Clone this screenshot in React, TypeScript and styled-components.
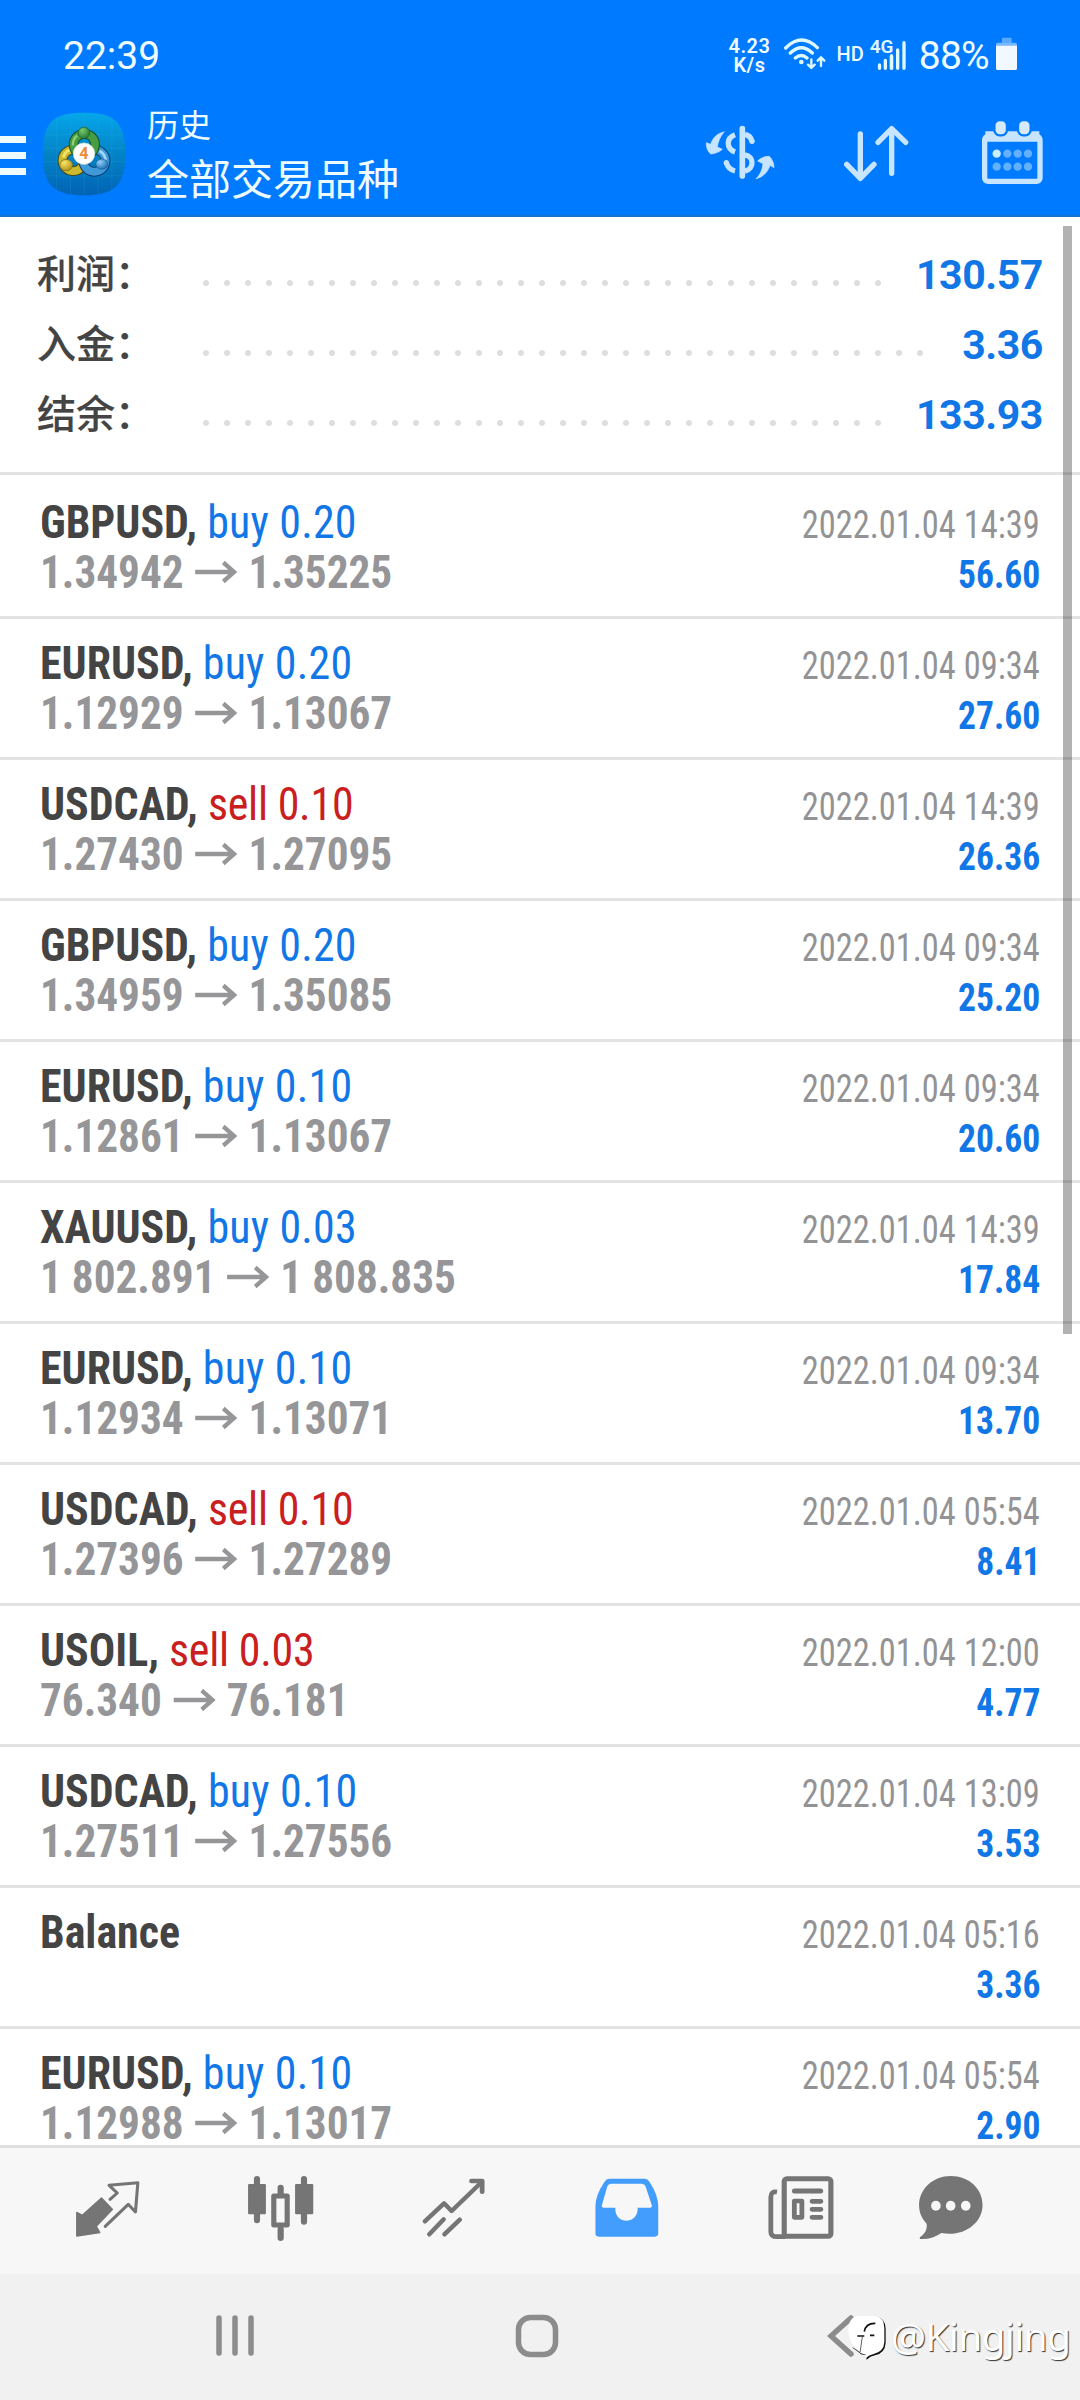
import React from "react";
import styled, { createGlobalStyle } from "styled-components";

const Global = createGlobalStyle`
  * { box-sizing: border-box; }
  body { margin: 0; background: #fff; }
`;

const latin = `Roboto, "Noto Sans CJK SC", sans-serif`;
const condensed = `"Roboto Condensed", Roboto, "Noto Sans CJK SC", sans-serif`;

const Screen = styled.div`
  position: relative;
  width: 1080px;
  height: 2400px;
  display: flex;
  flex-direction: column;
  overflow: hidden;
  background: #fff;
  font-family: ${latin};
`;

const Header = styled.header`
  height: 217px;
  flex: none;
  background: #007aff;
  border-bottom: 2px solid #1a72cf;
  color: #effcff;
  display: flex;
  flex-direction: column;
`;

const StatusBar = styled.div`
  height: 100px;
  padding: 8px 63px 0 63px;
  display: flex;
  align-items: center;
`;
const Clock = styled.div`
  font-size: 39px;
  line-height: 46px;
  flex: 1;
  padding-top: 4px;
`;
const Speed = styled.div`
  font-size: 20px;
  line-height: 19px;
  font-weight: 600;
  letter-spacing: 0.5px;
  text-align: center;
  padding-top: 3px;
  margin-right: 13px;
`;
const Hd = styled.div`
  font-size: 20px;
  font-weight: 500;
  margin: 0 5px 0 8px;
`;
const Percent = styled.div`
  font-size: 39px;
  line-height: 46px;
  letter-spacing: -0.7px;
  margin: 4px 7px 0 12px;
`;

const AppBar = styled.div`
  flex: 1;
  display: flex;
  align-items: flex-start;
`;
const Burger = styled.div`
  margin-top: 36px;
  width: 26px;
  display: flex;
  flex-direction: column;
  gap: 9px;
`;
const BurgerLine = styled.span`
  height: 7px;
  background: #effcff;
`;
const LogoBox = styled.div`
  width: 84px;
  height: 84px;
  margin: 12px 0 0 16px;
`;
const Titles = styled.div`
  margin: 3px 0 0 21px;
  flex: 1;
  font-weight: 400;
`;
const Caption = styled.div`
  font-size: 32px;
  line-height: 46px;
`;
const Title = styled.div`
  font-size: 42px;
  line-height: 62px;
  padding-top: 1px;
`;
const Actions = styled.div`
  display: flex;
  width: 390px;
  padding-top: 10px;
`;

const Summary = styled.section`
  height: 255px;
  flex: none;
  padding: 22px 37px 0;
`;
const SummaryRow = styled.div`
  height: 70px;
  display: flex;
  align-items: center;
`;
const SummaryLabel = styled.div`
  width: 166px;
  font-size: 39px;
  line-height: 56px;
  padding-top: 2px;
  font-weight: 500;
  color: #444;
  -webkit-text-stroke: 0.2px #444;
`;
const Dots = styled.div`
  flex: 1;
  height: 6px;
  margin: 17px 28px 0 0;
  background: radial-gradient(circle at 3px 3px, #dedede 2.6px, transparent 3.4px) 0 0 / 21px 6px repeat-x;
`;
const SummaryValue = styled.div`
  font-size: 41px;
  line-height: 48px;
  padding-top: 2px;
  font-weight: 700;
  color: #1277e6;
  letter-spacing: -0.4px;
`;

const List = styled.main`
  flex: none;
  height: 1673px;
  overflow: hidden;
  border-top: 3px solid #e3e3e3;
  padding-top: 3px;
`;
const Row = styled.article`
  height: 141px;
  border-bottom: 3px solid #e3e3e3;
  padding: 19px 40px 0;
  display: flex;
  justify-content: space-between;
  font-family: ${condensed};
  font-stretch: 75%;
  white-space: nowrap;
`;
const Side = styled.div<{ $end?: boolean }>`
  display: flex;
  flex-direction: column;
  align-items: ${(p) => (p.$end ? "flex-end" : "flex-start")};
`;
const NameLine = styled.div`
  font-size: 46px;
  line-height: 50px;
  font-weight: 700;
  color: #444;
  transform: scaleX(0.955);
  transform-origin: left;
`;
const Order = styled.span<{ $sell: boolean }>`
  font-weight: 400;
  letter-spacing: ${(p) => (p.$sell ? "-0.25px" : "0.2px")};
  color: ${(p) => (p.$sell ? "#c9201f" : "#1277e6")};
`;
const PriceLine = styled.div`
  display: flex;
  align-items: center;
  gap: 12px;
  font-size: 46px;
  line-height: 50px;
  font-weight: 700;
  color: #969699;
  transform: scaleX(0.94);
  transform-origin: left;
`;
const Time = styled.div`
  font-size: 39px;
  line-height: 50px;
  padding-top: 3px;
  height: 50px;
  color: #939396;
  transform: scaleX(0.882);
  transform-origin: right;
`;
const Profit = styled.div`
  font-size: 39px;
  line-height: 50px;
  padding-top: 3px;
  font-weight: 700;
  color: #1277e6;
  transform: scaleX(0.912);
  transform-origin: right;
`;

const Scrollbar = styled.div`
  position: absolute;
  left: 1063px;
  top: 226px;
  width: 9px;
  height: 1108px;
  background: rgba(0, 0, 0, 0.3);
`;

const Tabs = styled.nav`
  flex: none;
  height: 129px;
  padding: 0 64px 7px 21px;
  border-top: 3px solid #e0e0e0;
  background: #f7f7f7;
  display: grid;
  grid-template-columns: repeat(5, 173px) 130px;
  align-items: center;
  justify-items: center;
`;
const SystemNav = styled.nav`
  flex: 1;
  background: #f1f1f1;
  display: flex;
  padding: 40px 0 0 215px;
`;
const NavIcon = styled.svg<{ $gap: number }>`
  margin-right: ${(p) => p.$gap}px;
  fill: none;
  stroke: #8c8c8c;
  stroke-width: 5.5;
  stroke-linecap: round;
`;

const Watermark = styled.div`
  position: absolute;
  left: 848px;
  top: 2309px;
  display: flex;
  align-items: flex-start;
  gap: 4px;
  color: #fff;
  font: 400 39px/54px "Noto Sans", sans-serif;
  letter-spacing: -0.7px;
  text-shadow: 1px 1px 1px rgba(0, 0, 0, 0.8);
`;

type Trade = {
  name: string;
  side?: "buy" | "sell";
  lot?: string;
  from?: string;
  to?: string;
  time: string;
  profit: string;
};

const trades: Trade[] = [
  { name: "GBPUSD", side: "buy", lot: "0.20", from: "1.34942", to: "1.35225", time: "2022.01.04 14:39", profit: "56.60" },
  { name: "EURUSD", side: "buy", lot: "0.20", from: "1.12929", to: "1.13067", time: "2022.01.04 09:34", profit: "27.60" },
  { name: "USDCAD", side: "sell", lot: "0.10", from: "1.27430", to: "1.27095", time: "2022.01.04 14:39", profit: "26.36" },
  { name: "GBPUSD", side: "buy", lot: "0.20", from: "1.34959", to: "1.35085", time: "2022.01.04 09:34", profit: "25.20" },
  { name: "EURUSD", side: "buy", lot: "0.10", from: "1.12861", to: "1.13067", time: "2022.01.04 09:34", profit: "20.60" },
  { name: "XAUUSD", side: "buy", lot: "0.03", from: "1 802.891", to: "1 808.835", time: "2022.01.04 14:39", profit: "17.84" },
  { name: "EURUSD", side: "buy", lot: "0.10", from: "1.12934", to: "1.13071", time: "2022.01.04 09:34", profit: "13.70" },
  { name: "USDCAD", side: "sell", lot: "0.10", from: "1.27396", to: "1.27289", time: "2022.01.04 05:54", profit: "8.41" },
  { name: "USOIL", side: "sell", lot: "0.03", from: "76.340", to: "76.181", time: "2022.01.04 12:00", profit: "4.77" },
  { name: "USDCAD", side: "buy", lot: "0.10", from: "1.27511", to: "1.27556", time: "2022.01.04 13:09", profit: "3.53" },
  { name: "Balance", time: "2022.01.04 05:16", profit: "3.36" },
  { name: "EURUSD", side: "buy", lot: "0.10", from: "1.12988", to: "1.13017", time: "2022.01.04 05:54", profit: "2.90" },
];

const totals = [
  ["利润：", "130.57"],
  ["入金：", "3.36"],
  ["结余：", "133.93"],
];

const Arrow = () => (
  <svg width="45" height="24" viewBox="0 0 45 24" fill="none" stroke="#969699" strokeWidth="4.4">
    <path d="M0 12H42M30 2.5L41.5 12L30 21.5" />
  </svg>
);

const WifiIcon = () => (
  <svg width="45" height="36" viewBox="192 32 135 108" fill="none" stroke="#dffaff" strokeLinecap="round">
    <path strokeWidth="10" d="M200 68Q247 21 295 67M214 83Q247 51 280 83M229 98Q247 83 264 98" />
    <circle cx="247" cy="110" r="7" fill="#dffaff" stroke="none" />
    <path strokeWidth="7" strokeLinejoin="round" d="M277 102V127M267 118L277 128L287 118M306 122V97M296 106L306 96L316 106" />
  </svg>
);

const SignalIcon = () => (
  <svg width="38" height="36" viewBox="447 32 114 108">
    <path d="M478.500 119V129M496 105V129M514.500 92V129M533 74V129M552 52V129" stroke="#dffaff" strokeWidth="10" strokeLinecap="round" />
    <rect x="447" y="36" width="73" height="50" fill="#007aff" />
    <text x="449" y="84" fill="#dffaff" fontFamily="Roboto" fontWeight="600" fontSize="57">4G</text>
    <path d="M514.500 92V129" stroke="#dffaff" strokeWidth="10" strokeLinecap="round" />
  </svg>
);

const BatteryIcon = () => (
  <svg width="21" height="34" viewBox="828 35 63 102">
    <rect x="846" y="37" width="29" height="18" rx="3" fill="#58a9ff" />
    <rect x="828" y="52" width="63" height="82" rx="5" fill="#74b8ff" />
    <path d="M828 61H891V129Q891 134 886 134H833Q828 134 828 129Z" fill="#f2f8ff" />
  </svg>
);

const LogoIcon = () => (
  <svg width="84" height="84" viewBox="35 22 250 250">
    <defs>
      <linearGradient id="bg" x1="0" y1="0" x2="0" y2="1">
        <stop offset="0" stopColor="#06a6ea" />
        <stop offset=".5" stopColor="#0383c6" />
        <stop offset="1" stopColor="#0263b5" />
      </linearGradient>
      <radialGradient id="gr" cx=".35" cy=".3" r=".8"><stop offset="0" stopColor="#7cc86a" /><stop offset="1" stopColor="#1c7433" /></radialGradient>
      <radialGradient id="ye" cx=".35" cy=".3" r=".8"><stop offset="0" stopColor="#f8e36a" /><stop offset="1" stopColor="#a98c12" /></radialGradient>
      <radialGradient id="bl" cx=".35" cy=".3" r=".8"><stop offset="0" stopColor="#8fd0f8" /><stop offset="1" stopColor="#1767ad" /></radialGradient>
    </defs>
    <path d="M160 24C250 24 283 50 283 147C283 240 250 270 160 270C70 270 37 240 37 147C37 50 70 24 160 24Z" fill="url(#bg)" />
    <path d="M78 40V255M120 26V268M161 24V270M202 26V268M243 40V255M45 90H275M38 130H282M38 170H282M45 212H275" stroke="#3fc0f0" strokeOpacity=".2" strokeWidth="2" />
    <g fill="none">
      <circle cx="128" cy="166" r="32" stroke="#3d4c22" strokeWidth="29" />
      <circle cx="128" cy="166" r="32" stroke="#cdb92c" strokeWidth="23" />
      <path d="M98 157A32 32 0 0 1 128 133" stroke="#f3e46b" strokeWidth="9" />
      <circle cx="191" cy="167" r="33" stroke="#0b3f70" strokeWidth="29" />
      <circle cx="191" cy="167" r="33" stroke="#3f98d8" strokeWidth="23" />
      <path d="M206 138A32 32 0 0 1 224 166" stroke="#9fd8fa" strokeWidth="8" />
      <circle cx="161" cy="119" r="32" stroke="#134f2c" strokeWidth="29" />
      <circle cx="161" cy="119" r="32" stroke="#479c41" strokeWidth="23" />
      <path d="M127 122A34 34 0 0 1 140 92" stroke="#8ecf72" strokeWidth="7" />
    </g>
    <circle cx="160" cy="84" r="17" fill="url(#gr)" stroke="#16602f" strokeWidth="2" />
    <ellipse cx="107" cy="180" rx="19" ry="17" fill="url(#ye)" stroke="#7d6a12" strokeWidth="2" />
    <ellipse cx="213" cy="177" rx="18" ry="15" fill="url(#bl)" stroke="#145a99" strokeWidth="2" />
    <circle cx="160" cy="146" r="32" fill="#fff" stroke="#c8d9d0" strokeWidth="2" />
    <text x="160" y="163" textAnchor="middle" fill="#ee8b35" fontFamily="Roboto" fontWeight="700" fontSize="48">4</text>
  </svg>
);

const ActionIcons = () => (
  <svg width="374" height="90" viewBox="0 0 1122 270" fill="none" stroke="#c8e5ff" strokeLinecap="round" strokeLinejoin="round">
    <path strokeWidth="17" d="M157 56V198" />
    <path strokeWidth="16" strokeLinecap="butt" d="M135 74C108 84 108 116 135 126M165 73C178 76 184 85 186 94M165 135C193 138 193 178 165 183M135 183C118 179 112 169 109 158" />
    <circle cx="186" cy="94" r="8" fill="#c8e5ff" stroke="none" />
    <circle cx="109" cy="158" r="8" fill="#c8e5ff" stroke="none" />
    <g fill="#c8e5ff" strokeWidth="2">
      <path d="M102 66C83 69 68 83 62 103L49 98C48 112 53 124 62 132C75 131 87 127 97 118L82 111C84 94 91 80 102 66Z" />
      <path d="M199 206C218 202 234 186 240 166L252 173C252 160 247 148 238 139C225 139 213 143 203 153L219 161C217 180 210 194 199 206Z" />
    </g>
    <path strokeWidth="16" d="M511 72V203M470 163L511 205L552 163M605 190V57M564 97L605 56L647 97" />
    <rect x="884" y="79" width="166" height="135" rx="10" strokeWidth="16" />
    <path strokeWidth="16" strokeLinecap="butt" d="M886 72H1048M886 87H1048" />
    <g fill="#d5e9f8" stroke="#007aff" strokeWidth="7">
      <rect x="913" y="30" width="38" height="46" rx="16" />
      <rect x="984" y="30" width="38" height="46" rx="16" />
    </g>
    <g stroke="none" fill="#62b0ff">
      <circle cx="920" cy="131" r="12.500" fill="#c8eeff" />
      {[952, 983, 1014].map((x) => <circle key={x} cx={x} cy="131" r="12.500" />)}
      {[920, 952, 983, 1014].map((x) => <circle key={x} cx={x} cy="170" r="12.500" />)}
    </g>
  </svg>
);

const TabSvg = styled.svg`
  width: 70px;
  height: 70px;
  fill: none;
  stroke: #757575;
  stroke-linecap: round;
  stroke-linejoin: round;
`;

const TabIcons = () => (
  <>
    <TabSvg viewBox="212 130 204 210" preserveAspectRatio="none">
      <path fill="#757575" strokeWidth="4" d="M295 205L327 239L280 290L290 309L223 319V248L239 257Z" />
      <path strokeWidth="9" d="M320 209L341 190L317 167L401 159L394 247L373 224L306 290" />
    </TabSvg>
    <TabSvg viewBox="713 130 204 210" preserveAspectRatio="none">
      <path strokeWidth="18" d="M745 148V272M882 148V276M814 174V195M814 298V325" />
      <path fill="#757575" strokeWidth="6" d="M722 166H768V251H722ZM859 166H906V251H859Z" />
      <rect x="794" y="199" width="39" height="87" strokeWidth="15" />
    </TabSvg>
    <TabSvg viewBox="1215 130 204 210" preserveAspectRatio="none">
      <path strokeWidth="13" d="M1232 275L1288 221L1310 244L1397 158M1245 314L1287 269M1289 314L1334 270" />
      <path strokeWidth="14" d="M1368 154H1399V186" />
    </TabSvg>
    <TabSvg viewBox="152 130 204 210" preserveAspectRatio="none">
      <path fill="#439dfd" stroke="none" fillRule="evenodd" d="M202 147H306Q314 147 320 157Q345 197 345 230V311Q345 321 335 321H172Q162 321 162 311V230Q162 197 188 157Q194 147 202 147ZM208 162Q201 162 197 169L181 226Q179 234 187 234H220V240C222 284 282 284 285 240V234H321Q328 234 326 226L308 170Q305 162 297 162Z" />
    </TabSvg>
    <TabSvg viewBox="655 130 204 210" preserveAspectRatio="none">
      <rect x="711" y="147" width="136" height="173" rx="8" strokeWidth="15" />
      <path strokeWidth="14" strokeLinecap="butt" d="M690 187Q672 184 672 202V306Q672 321 690 321H715" />
      <path strokeWidth="15" d="M741 184H817" />
      <path strokeWidth="14" d="M792 215H818M792 239H818M792 263H818" />
      <rect x="740.500" y="214" width="22" height="49" strokeWidth="14" />
    </TabSvg>
    <TabSvg viewBox="1092 130 204 210" preserveAspectRatio="none">
      <path fill="#757575" stroke="none" d="M1193 139C1246 139 1286 177 1286 226C1286 283 1228 323 1166 310C1148 323 1126 330 1104 328Q1101 326 1104 322C1119 311 1125 299 1123 282C1108 266 1101 248 1101 227C1101 177 1142 139 1193 139Z" />
      <g fill="#f7f7f7" stroke="none">
        <ellipse cx="1150" cy="228" rx="14" ry="15" /><ellipse cx="1193" cy="228" rx="14" ry="15" /><ellipse cx="1237" cy="228" rx="14" ry="15" />
      </g>
    </TabSvg>
  </>
);

const BadgeSvg = styled.svg`
  margin-top: 6px;
`;

const BadgeIcon = () => (
  <BadgeSvg width="39" height="46" viewBox="85 28 117 138">
    <path d="M116 33H168Q198 36 198 70V112Q196 143 166 149Q151 152 141 162L139 149L124 146Q91 120 88 77Q88 36 116 33Z" fill="#111" />
    <path d="M116 31H166Q194 34 194 68V110Q192 139 162 145Q148 148 138 158V147L122 142Q88 118 86 76Q86 34 116 31Z" fill="#fff" />
    <path d="M167 53Q138 52 134 78M113 91H134M151 89H164" fill="none" stroke="#111" strokeWidth="5" />
    <path d="M128 93L121 141L99 126" fill="none" stroke="#444" strokeWidth="2.500" />
  </BadgeSvg>
);

export default function App() {
  return (
    <Screen>
      <Global />
      <Header>
        <StatusBar>
          <Clock>22:39</Clock>
          <Speed>4.23<br />K/s</Speed>
          <WifiIcon />
          <Hd>HD</Hd>
          <SignalIcon />
          <Percent>88%</Percent>
          <BatteryIcon />
        </StatusBar>
        <AppBar>
          <Burger><BurgerLine /><BurgerLine /><BurgerLine /></Burger>
          <LogoBox><LogoIcon /></LogoBox>
          <Titles>
            <Caption>历史</Caption>
            <Title>全部交易品种</Title>
          </Titles>
          <Actions><ActionIcons /></Actions>
        </AppBar>
      </Header>
      <Summary>
        {totals.map(([label, value]) => (
          <SummaryRow key={label}>
            <SummaryLabel>{label}</SummaryLabel>
            <Dots />
            <SummaryValue>{value}</SummaryValue>
          </SummaryRow>
        ))}
      </Summary>
      <List>
        {trades.map((t, i) => (
          <Row key={i}>
            <Side>
              <NameLine>
                {t.name}
                {t.side && <>, <Order $sell={t.side === "sell"}>{t.side} {t.lot}</Order></>}
              </NameLine>
              {t.from && <PriceLine><span>{t.from}</span><Arrow /><span>{t.to}</span></PriceLine>}
            </Side>
            <Side $end>
              <Time>{t.time}</Time>
              <Profit>{t.profit}</Profit>
            </Side>
          </Row>
        ))}
      </List>
      <Tabs><TabIcons /></Tabs>
      <SystemNav>
        <NavIcon $gap={259} width="40" height="44" viewBox="0 0 40 44"><path d="M4 4V39M20 4V39M36 4V39" /></NavIcon>
        <NavIcon $gap={267} width="46" height="46" viewBox="0 0 46 46"><rect x="4.500" y="3.500" width="37" height="37" rx="12" /></NavIcon>
        <NavIcon $gap={0} width="30" height="44" viewBox="0 0 30 44"><path d="M24 4L4 22L24 40" /></NavIcon>
      </SystemNav>
      <Watermark><BadgeIcon />@Kingjing</Watermark>
      <Scrollbar />
    </Screen>
  );
}
